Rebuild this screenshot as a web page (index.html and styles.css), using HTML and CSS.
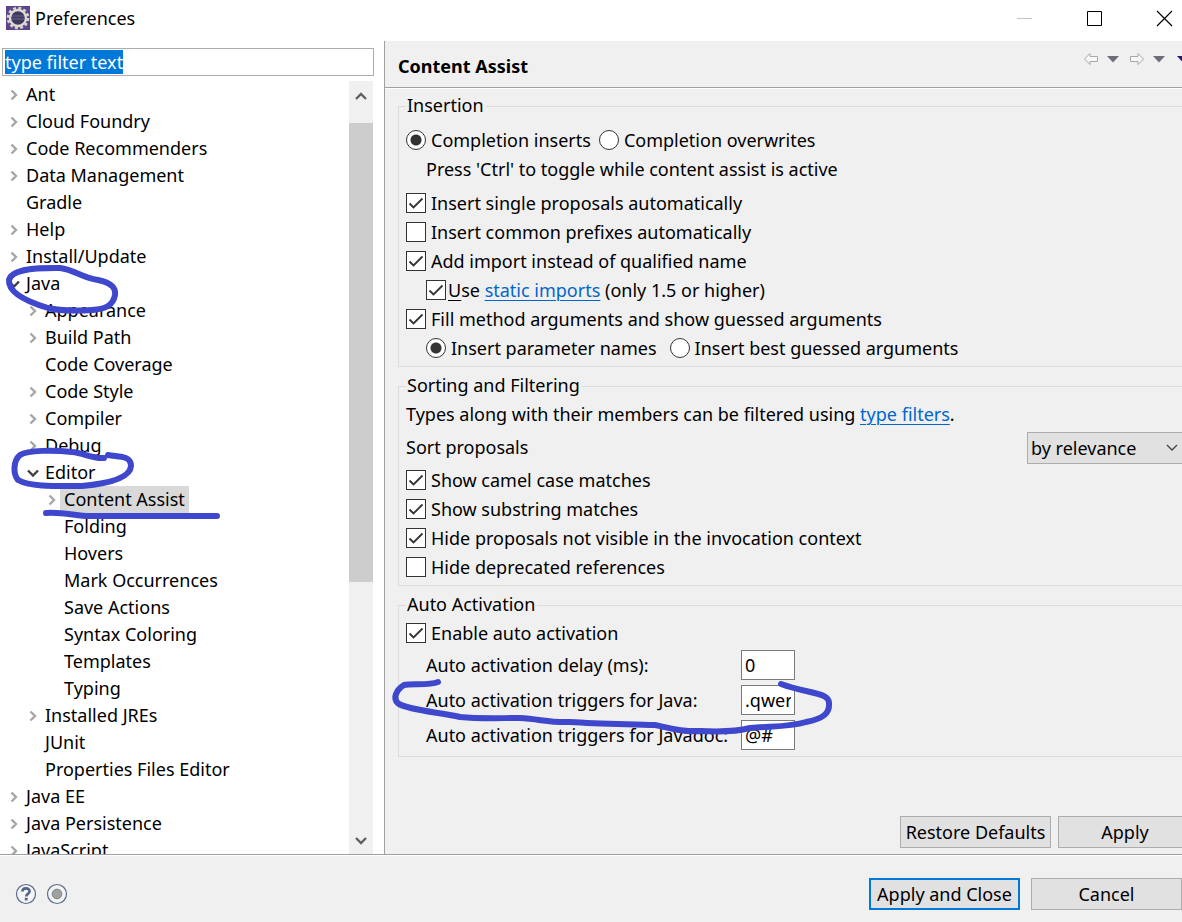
FILE: index.html
```html
<!DOCTYPE html>
<html lang="en">

<head>
    <meta charset="UTF-8">
    <meta name="viewport" content="width=device-width, initial-scale=1.0">
    <title>Preferences</title>
    <link rel="stylesheet" href="styles.css">
</head>

<body>
    <!-- shared arrow shapes -->
    <svg class="defs" aria-hidden="true">
        <symbol id="closed" viewBox="0 0 12 12"><path d="M3.5 1.5 L8 6 L3.5 10.5" fill="none" stroke="#a6a6a6" stroke-width="2.4"/></symbol>
        <symbol id="opened" viewBox="0 0 12 12"><path d="M1 3.5 L6 8.5 L11 3.5" fill="none" stroke="#404040" stroke-width="2.4"/></symbol>
        <symbol id="drop" viewBox="0 0 12 7"><path d="M0 0 H12 L6 6.5 Z" fill="currentColor"/></symbol>
    </svg>

    <div class="window">
        <!-- title bar -->
        <div class="titlebar">
            <svg class="logo" viewBox="0 0 24 24">
                <rect width="24" height="24" fill="#5c4689"/>
                <circle cx="12" cy="12" r="9.8" fill="none" stroke="#d8d3cc" stroke-width="3" stroke-dasharray="2.9 2.23"/>
                <circle cx="12" cy="12" r="8" fill="#3f3960" stroke="#dcd8d2" stroke-width="2.4"/>
                <path d="M6 10 H18 M6 13 H18" stroke="#6a6290" stroke-width="1"/>
            </svg>
            <span class="caption">Preferences</span>
            <button class="win" aria-label="Minimize"><svg viewBox="0 0 17 17"><path d="M1 8.5 H16" stroke="#c4c4c4"/></svg></button>
            <button class="win" aria-label="Maximize"><svg viewBox="0 0 17 17"><path d="M1.5 1.5 H15.5 V15.5 H1.5 Z" fill="none" stroke="#000"/></svg></button>
            <button class="win" aria-label="Close"><svg viewBox="0 0 17 17"><path d="M1 1 L16 16 M16 1 L1 16" stroke="#000" stroke-width="1.2"/></svg></button>
        </div>

        <div class="main">
            <!-- tree -->
            <div class="side">
                <input class="filter" id="filter" type="text" value="type filter text" aria-label="type filter text">
                <div class="tree-box">
                    <ul class="tree">
                        <li><svg><use href="#closed"/></svg><a href="#">Ant</a></li>
                        <li><svg><use href="#closed"/></svg><a href="#">Cloud Foundry</a></li>
                        <li><svg><use href="#closed"/></svg><a href="#">Code Recommenders</a></li>
                        <li><svg><use href="#closed"/></svg><a href="#">Data Management</a></li>
                        <li><svg></svg><a href="#">Gradle</a></li>
                        <li><svg><use href="#closed"/></svg><a href="#">Help</a></li>
                        <li><svg><use href="#closed"/></svg><a href="#">Install/Update</a></li>
                        <li><svg><use href="#opened"/></svg><a href="#">Java</a>
                            <ul>
                                <li><svg><use href="#closed"/></svg><a href="#">Appearance</a></li>
                                <li><svg><use href="#closed"/></svg><a href="#">Build Path</a></li>
                                <li><svg></svg><a href="#">Code Coverage</a></li>
                                <li><svg><use href="#closed"/></svg><a href="#">Code Style</a></li>
                                <li><svg><use href="#closed"/></svg><a href="#">Compiler</a></li>
                                <li><svg><use href="#closed"/></svg><a href="#">Debug</a></li>
                                <li><svg><use href="#opened"/></svg><a href="#">Editor</a>
                                    <ul>
                                        <li><svg><use href="#closed"/></svg><a class="current" href="#">Content Assist</a></li>
                                        <li><svg></svg><a href="#">Folding</a></li>
                                        <li><svg></svg><a href="#">Hovers</a></li>
                                        <li><svg></svg><a href="#">Mark Occurrences</a></li>
                                        <li><svg></svg><a href="#">Save Actions</a></li>
                                        <li><svg></svg><a href="#">Syntax Coloring</a></li>
                                        <li><svg></svg><a href="#">Templates</a></li>
                                        <li><svg></svg><a href="#">Typing</a></li>
                                    </ul>
                                </li>
                                <li><svg><use href="#closed"/></svg><a href="#">Installed JREs</a></li>
                                <li><svg></svg><a href="#">JUnit</a></li>
                                <li><svg></svg><a href="#">Properties Files Editor</a></li>
                            </ul>
                        </li>
                        <li><svg><use href="#closed"/></svg><a href="#">Java EE</a></li>
                        <li><svg><use href="#closed"/></svg><a href="#">Java Persistence</a></li>
                        <li><svg><use href="#closed"/></svg><a href="#">JavaScript</a></li>
                    </ul>
                    <div class="scrollbar">
                        <svg viewBox="0 0 12 12"><path d="M1 9 L6 4 L11 9" fill="none" stroke="#606060" stroke-width="2.4"/></svg>
                        <div class="track"><div class="thumb"></div></div>
                        <svg viewBox="0 0 12 12"><path d="M1 3 L6 8 L11 3" fill="none" stroke="#606060" stroke-width="2.4"/></svg>
                    </div>
                </div>
            </div>

            <!-- page -->
            <div class="page">
                <div class="head">
                    <h1>Content Assist</h1>
                    <div class="nav">
                        <svg class="arrow" viewBox="0 0 16 14"><path d="M1.5 7 L7 1.5 V4.5 H14.5 V9.5 H7 V12.5 Z" fill="#f8f8f8" stroke="#a8a8a8"/></svg>
                        <svg class="drop"><use href="#drop"/></svg>
                        <svg class="arrow" viewBox="0 0 16 14"><path d="M14.5 7 L9 1.5 V4.5 H1.5 V9.5 H9 V12.5 Z" fill="#f8f8f8" stroke="#a8a8a8"/></svg>
                        <svg class="drop"><use href="#drop"/></svg>
                        <svg class="drop menu"><use href="#drop"/></svg>
                    </div>
                </div>

                <div class="content">
                    <fieldset>
                        <legend>Insertion</legend>
                        <div class="row first">
                            <label><input type="radio" name="completion" checked>Completion inserts</label>
                            <label><input type="radio" name="completion">Completion overwrites</label>
                        </div>
                        <div class="row indent hint">Press 'Ctrl' to toggle while content assist is active</div>
                        <div class="row"><label><input type="checkbox" checked>Insert single proposals automatically</label></div>
                        <div class="row"><label><input type="checkbox">Insert common prefixes automatically</label></div>
                        <div class="row"><label><input type="checkbox" checked>Add import instead of qualified name</label></div>
                        <div class="row indent tight">
                            <input type="checkbox" id="static" checked>
                            <label for="static"><span><u>U</u>se <a href="#">static imports</a> (only 1.5 or higher)</span></label>
                        </div>
                        <div class="row"><label><input type="checkbox" checked>Fill method arguments and show guessed arguments</label></div>
                        <div class="row indent wide">
                            <label><input type="radio" name="guess" checked>Insert parameter names</label>
                            <label><input type="radio" name="guess">Insert best guessed arguments</label>
                        </div>
                    </fieldset>

                    <fieldset>
                        <legend>Sorting and Filtering</legend>
                        <div class="row"><span>Types along with their members can be filtered using <a href="#">type filters</a>.</span></div>
                        <div class="row sort">
                            <label for="sort">Sort proposals</label>
                            <select id="sort">
                                <option>by relevance</option>
                            </select>
                        </div>
                        <div class="row"><label><input type="checkbox" checked>Show camel case matches</label></div>
                        <div class="row"><label><input type="checkbox" checked>Show substring matches</label></div>
                        <div class="row"><label><input type="checkbox" checked>Hide proposals not visible in the invocation context</label></div>
                        <div class="row"><label><input type="checkbox">Hide deprecated references</label></div>
                    </fieldset>

                    <fieldset>
                        <legend>Auto Activation</legend>
                        <div class="row"><label><input type="checkbox" checked>Enable auto activation</label></div>
                        <div class="triggers">
                            <label for="delay">Auto activation delay (ms):</label>
                            <input type="text" id="delay" value="0">
                            <label for="java">Auto activation triggers for Java:</label>
                            <input type="text" id="java" value=".qwer">
                            <label for="javadoc">Auto activation triggers for Javadoc:</label>
                            <input type="text" id="javadoc" value="@#">
                        </div>
                    </fieldset>

                    <div class="actions">
                        <button class="btn">Restore Defaults</button>
                        <button class="btn">Apply</button>
                    </div>
                </div>
            </div>
        </div>

        <!-- bottom bar -->
        <div class="footer">
            <div class="help">
                <button class="round" aria-label="Help">
                    <svg viewBox="0 0 22 22">
                        <circle cx="11" cy="11" r="9.5" fill="#f4f4f4" stroke="#5a6b8c" stroke-width="1.2"/>
                        <path d="M7.4 8.6 C7.4 4.4 14.6 4.4 14.6 8.2 C14.6 10.8 11.2 10.6 11.2 13.6" fill="none" stroke="#52648c" stroke-width="2.6"/>
                        <rect x="9.8" y="14.8" width="2.8" height="2.6" fill="#52648c"/>
                    </svg>
                </button>
                <button class="round" aria-label="Record">
                    <svg viewBox="0 0 22 22">
                        <circle cx="11" cy="11" r="9.5" fill="#f4f4f4" stroke="#5a6b8c" stroke-width="1.2"/>
                        <circle cx="11" cy="11" r="4.8" fill="#a0a0a0" stroke="#808080"/>
                    </svg>
                </button>
            </div>
            <button class="btn primary">Apply and Close</button>
            <button class="btn">Cancel</button>
        </div>

        <!-- pen marks over the window -->
        <svg class="marks" width="1182" height="922" viewBox="0 0 1182 922" aria-hidden="true">
            <path d="M48 308 C28 302 8 293 9 280 C12 267 45 268 60 268 C75 270 82 278 98 280 C112 283 116 288 115 295 C113 306 105 309 92 310 C75 311 60 311 48 308 Z"/>
            <path d="M104 458 C92 459 84 453 72 452 C54 450 28 450 20 455 C13 461 13 474 18 480 C30 487 58 486 82 486 C104 484 130 479 131 466 C131 455 118 457 108 455"/>
            <path d="M46 513 C62 512 72 515 86 516 H217"/>
            <path d="M438 682 C428 686 412 683 404 685 C396 690 392 699 399 704 C412 711 440 712 460 717 C480 719 500 718 520 718 C540 719 550 723 570 722 C600 724 630 724 655 725 C670 728 680 732 700 731 C720 732 735 732 750 728 C775 726 790 727 806 722 C822 719 830 714 829 703 C829 692 808 694 781 684"/>
        </svg>
    </div>

    <script>
        // the filter starts with its text selected
        document.getElementById("filter").select();
    </script>
</body>

</html>
```
FILE: styles.css
```css
* {
    margin: 0;
    padding: 0;
    box-sizing: border-box;
}

body,
input,
select,
button {
    font-family: "Noto Sans", "Open Sans", sans-serif;
    font-size: 18px;
    color: #000;
}

body {
    line-height: 27px;
}

ul {
    list-style: none;
}

a {
    color: #0066cc;
    text-underline-offset: 3px;
    text-decoration-thickness: 1px;
}

u {
    text-underline-offset: 3px;
    text-decoration-thickness: 1px;
}

.defs {
    display: none;
}

.window {
    position: relative;
    display: flex;
    flex-direction: column;
    height: 100vh;
    overflow: hidden;
    background-color: #f0f0f0;
}

/* title bar */
.titlebar {
    display: flex;
    align-items: center;
    flex: none;
    height: 41px;
    padding: 0 9px 5px 6px;
    background-color: #fff;
}

.logo {
    width: 24px;
    height: 24px;
    margin-right: 5px;
}

.caption {
    flex: 1;
}

.win {
    width: 17px;
    height: 17px;
    margin-left: 53px;
    border: 0;
    background: none;
}

.win svg {
    display: block;
}

/* layout */
.main {
    display: flex;
    flex: 1;
    min-height: 0;
}

.side {
    display: flex;
    flex-direction: column;
    flex: none;
    width: 385px;
    padding: 7px 10px 0 2px;
    border-right: 1px solid #a0a0a0;
    background-color: #fff;
}

.filter {
    flex: none;
    height: 28px;
    padding: 0 2px;
    border: 1px solid #abadb3;
    outline: none;
}

.filter::selection {
    background-color: #0078d7;
    color: #fff;
}

/* tree */
.tree-box {
    display: flex;
    flex: 1;
    min-height: 0;
    margin: 5px 1px 0 0;
}

.tree {
    flex: 1;
    padding-left: 6px;
    overflow: hidden;
}

.tree ul {
    padding-left: 19px;
}

.tree svg {
    width: 12px;
    height: 12px;
    margin: 8px 2px 0 0;
    vertical-align: top;
}

.tree a {
    display: inline-block;
    height: 27px;
    padding: 0 4px;
    vertical-align: top;
    color: #000;
    text-decoration: none;
}

.tree a.current {
    background-color: #d9d9d9;
}

.scrollbar {
    display: flex;
    flex-direction: column;
    align-items: center;
    width: 24px;
    padding: 9px 0 7px;
    background-color: #f0f0f0;
}

.scrollbar svg {
    width: 12px;
    height: 12px;
}

.track {
    flex: 1;
    width: 100%;
    padding: 21px 0 17px;
}

.thumb {
    height: 66%;
    background-color: #cdcdcd;
}

/* page */
.page {
    display: flex;
    flex-direction: column;
    flex: 1;
    min-width: 0;
    overflow: hidden;
}

.head {
    display: flex;
    justify-content: space-between;
    flex: none;
    height: 47px;
    padding-left: 13px;
    border-bottom: 1px solid #a0a0a0;
    box-shadow: 0 1px #fff;
}

.head h1 {
    padding-top: 12px;
    font-size: 18px;
}

.nav {
    display: flex;
    align-items: center;
    gap: 8px;
    height: 36px;
    margin-right: -7px;
    color: #6d6d78;
}

.nav .arrow {
    width: 16px;
    height: 14px;
    margin-left: 2px;
}

.nav .drop {
    width: 12px;
    height: 7px;
}

.nav .menu {
    margin-left: 4px;
    color: #2d1a66;
}

.content {
    display: flex;
    flex-direction: column;
    flex: 1;
    margin-right: -10px;
    padding: 4px 0 6px 13px;
}

fieldset {
    margin-bottom: 5px;
    padding: 0 0 3px 7px;
    border: 1px solid #dcdcdc;
}

legend {
    height: 28px;
    padding: 0 2px 0 1px;
}

.row {
    display: flex;
    align-items: center;
    gap: 8px;
    height: 29px;
}

.row label {
    display: flex;
    align-items: center;
    gap: 5px;
}

.first {
    margin-top: 6px;
}

.hint {
    margin-bottom: 5px;
}

.indent {
    padding-left: 20px;
}

.tight {
    gap: 2px;
}

.wide {
    gap: 13px;
}

.sort {
    justify-content: space-between;
    height: 37px;
}

input[type="checkbox"],
input[type="radio"] {
    flex: none;
    width: 20px;
    height: 20px;
    margin-bottom: 2px;
    border: 1px solid #333;
    background-color: #fff;
    appearance: none;
}

input[type="checkbox"]:checked {
    background-image: url("data:image/svg+xml,%3Csvg xmlns='http://www.w3.org/2000/svg' viewBox='0 0 18 18'%3E%3Cpath d='M2.5 9.5 L6.5 13.5 L15.5 4.5' fill='none' stroke='%23333' stroke-width='1.8'/%3E%3C/svg%3E");
}

input[type="radio"] {
    border-radius: 50%;
}

input[type="radio"]:checked {
    background-image: radial-gradient(circle, #333 5px, transparent 6px);
}

select {
    width: 164px;
    height: 32px;
    padding: 0 3px;
    border: 1px solid #adadad;
    border-radius: 0;
    background: #e1e1e1 url("data:image/svg+xml,%3Csvg xmlns='http://www.w3.org/2000/svg' width='12' height='8'%3E%3Cpath d='M1 1 L6 6 L11 1' fill='none' stroke='%23444' stroke-width='1.3'/%3E%3C/svg%3E") no-repeat right 12px center;
    appearance: none;
}

.triggers {
    display: grid;
    grid-template-columns: 310px 54px;
    gap: 5px;
    padding: 2px 0 3px 20px;
    line-height: 30px;
    white-space: nowrap;
}

.triggers input {
    height: 30px;
    padding: 0 3px;
    border: 1px solid #7a7a7a;
}

.actions {
    display: flex;
    justify-content: flex-end;
    gap: 7px;
    margin-top: auto;
}

.btn {
    width: 151px;
    height: 32px;
    border: 1px solid #adadad;
    background-color: #e1e1e1;
    white-space: nowrap;
}

.actions .btn:last-child {
    width: 134px;
}

.primary {
    border: 2px solid #0078d7;
}

/* bottom bar */
.footer {
    display: flex;
    align-items: center;
    flex: none;
    gap: 11px;
    height: 68px;
    padding: 10px 0 0 15px;
    border-top: 1px solid #a0a0a0;
    box-shadow: inset 0 1px #fff;
}

.help {
    display: flex;
    gap: 9px;
    margin-right: auto;
}

.round {
    width: 22px;
    height: 22px;
    border: 0;
    background: none;
}

.round svg {
    display: block;
}

.marks {
    position: absolute;
    top: 0;
    left: 0;
    fill: none;
    stroke: #3f48cc;
    stroke-width: 6;
    stroke-linecap: round;
    stroke-linejoin: round;
    pointer-events: none;
}
```
